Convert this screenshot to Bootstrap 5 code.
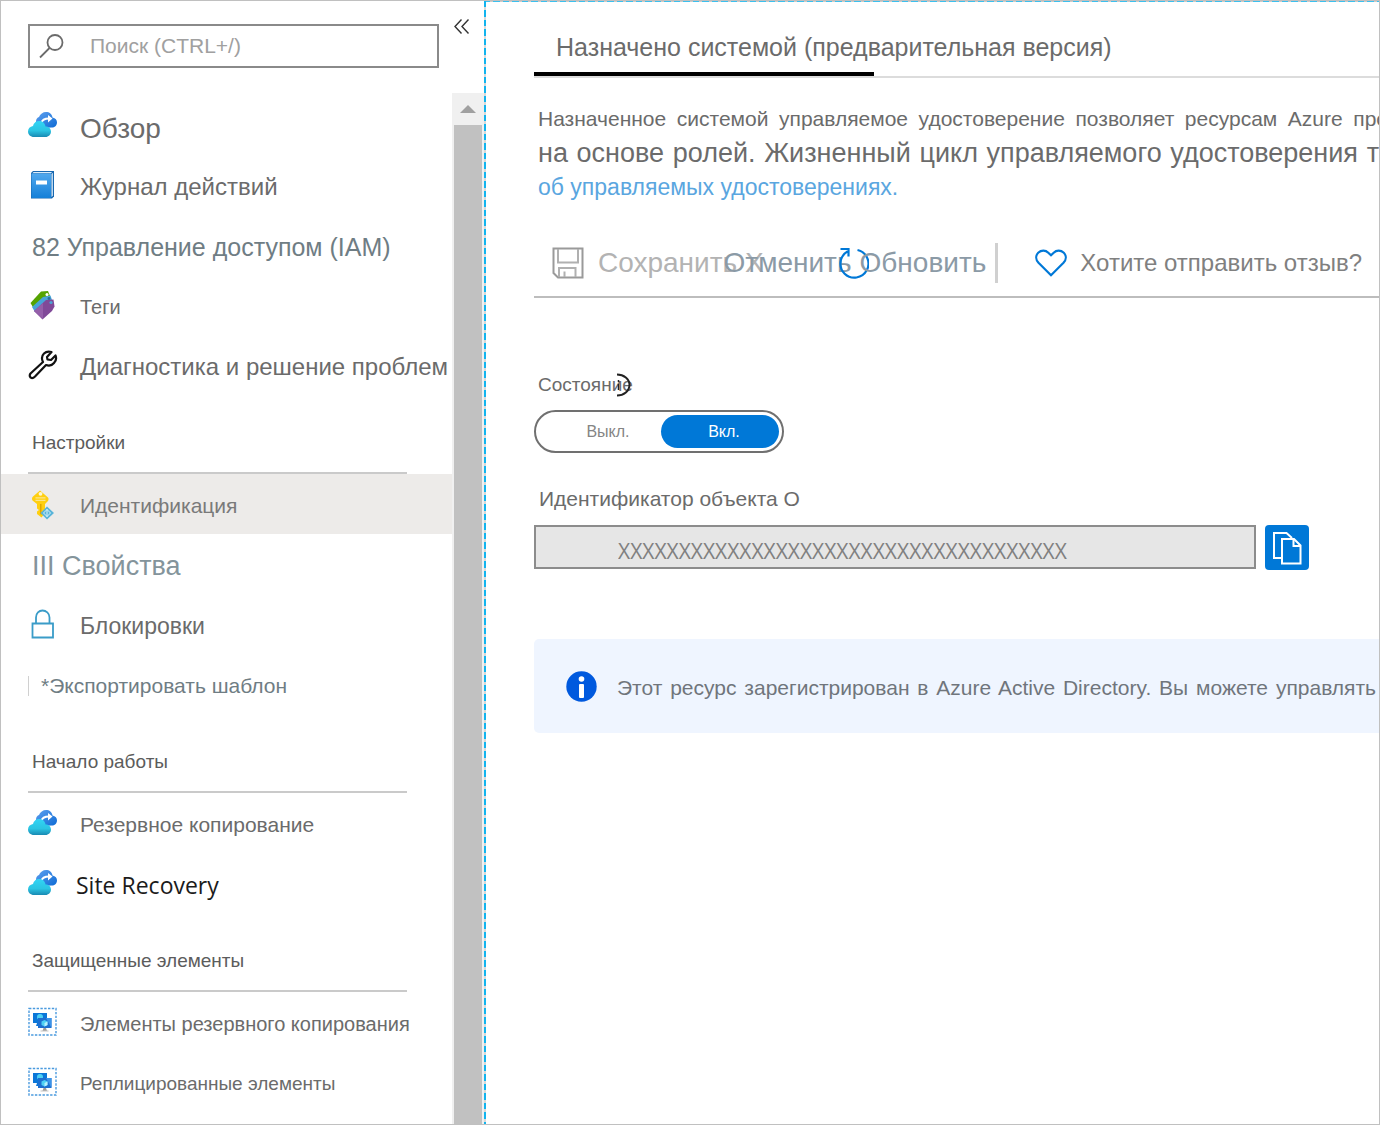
<!DOCTYPE html>
<html lang="ru">
<head>
<meta charset="utf-8">
<meta name="viewport" content="width=device-width, initial-scale=1">
<title>Идентификация</title>
<link href="https://cdn.jsdelivr.net/npm/bootstrap@5.3.0/dist/css/bootstrap.min.css" rel="stylesheet">
<style>
  body { font-family: "Liberation Sans", Arial, sans-serif; color: #6b6b6b; background: #fff; }
  svg { display: block; flex: none; }
  .t16 { font-size: 16px; } .t19 { font-size: 19px; } .t20 { font-size: 20px; } .t21 { font-size: 21px; }
  .t23 { font-size: 23px; } .t24 { font-size: 24px; } .t25 { font-size: 25px; } .t27 { font-size: 27px; } .t28 { font-size: 28px; }
  .plain-btn { border: 0; background: none; padding: 0; color: inherit; }
  .frame { min-height: 100vh; border: 1px solid #c0c0c0; }

  /* side menu */
  .side { width: 483px; flex: none; }
  .side-top { height: 92px; padding: 23px 0 0 27px; }
  .search-box { width: 411px; height: 44px; border: 2px solid #8a8a8a; padding: 0 9px; gap: 26px; }
  .search-box input { border: 0; outline: 0; padding: 0; min-width: 0; color: #6b6b6b; }
  .search-box input::placeholder { color: #a0a0a0; opacity: 1; }
  .fold-btn { margin: -6px 0 0 14px; }
  .side-nav { padding-top: 2px; }
  .menu-row { height: 60px; padding-left: 27px; text-decoration: none; color: #6b6b6b; line-height: 32px; white-space: nowrap; }
  .menu-row svg { margin-right: 22px; }
  .menu-row span { padding-top: 4px; }
  .menu-row .t28 { padding-top: 8px; }
  .menu-row.bare { padding-left: 31px; }
  .menu-row.picked { background: #edebe9; color: #7a7a7a; }
  .menu-row.export span { margin: 4px 0 0 -4px; padding: 0 0 0 12px; border-left: 1px solid #d0d0d0; line-height: 20px; }
  .slate { color: #6f7d84; }
  .slate-light { color: #84949b; }
  .site-rec { font-family: "Open Sans", "Noto Sans", sans-serif; color: #1b1b1b; margin-left: -4px; }
  .menu-head { height: 79px; margin: 0 45px 0 27px; padding: 36px 0 0 4px; border-bottom: 2px solid #cacaca; line-height: 24px; color: #5c5c5c; font-weight: 400; }
  .scroll-col { width: 32px; flex: none; background: #f0f0f0; }
  .scroll-up { height: 32px; }
  .scroll-thumb { background: #c1c1c1; margin: 0 2px; }

  /* main pane */
  .pane { min-width: 0; overflow: hidden; padding-left: 50px;
    background:
      repeating-linear-gradient(180deg, #12b4ee 0 6px, #d8d8d8 6px 9px, #12b4ee 9px 16px, #d8d8d8 16px 19px) 0 0 / 2px 100% no-repeat,
      repeating-linear-gradient(90deg, #3cc0ee 0 6px, #d0c8c4 6px 9px, #3cc0ee 9px 16px, #d0c8c4 16px 19px) 0 0 / 100% 1px no-repeat; }
  .tab-strip { height: 77px; border-bottom: 2px solid #dcdcdc; }
  .tab-strip .nav-link { width: 340px; height: 75px; padding: 20px 0 0 22px; line-height: 52px; border-bottom: 4px solid #000; color: #6b6b6b; white-space: nowrap; }
  .about { margin: 24px 0 25px 4px; line-height: 34px; }
  .about span { text-align-last: justify; }
  .about .wide-line { margin-right: -9px; }
  .about a { color: #5aa6e0; text-decoration: none; }
  .tools { height: 69px; border-bottom: 2px solid #bdbdbd; padding-left: 18px; white-space: nowrap; line-height: 40px; color: #8b9aa6; }
  .tools .save { gap: 14px; color: #b3b3b3; }
  .tools .cancel { margin-left: -40px; }
  .tools .reload { margin-left: -14px; }
  .tools .reload span { margin-left: -9px; }
  .tools .split { width: 3px; height: 40px; margin: 0 37px 0 9px; background: #d0d0d0; }
  .tools .rate { gap: 13px; color: #808080; }
  .state-head { margin: 75px 0 13px 4px; line-height: 24px; }
  .state-head svg { margin-left: -16px; }
  .switch-box { width: 250px; height: 43px; border: 2px solid #707070; border-radius: 22px; padding: 3px; }
  .switch-box label { height: 33px; line-height: 33px; border-radius: 17px; color: #858585; text-align: center; cursor: pointer; }
  .switch-box .off { flex: 1 1 0; padding-left: 16px; }
  .switch-box .on { width: 118px; padding-left: 8px; }
  .switch-box .btn-check:checked + label { background: #0078d7; color: #fff; }
  .id-label { margin: 33px 0 13px 5px; line-height: 26px; }
  .id-row { gap: 9px; padding-right: 70px; margin-bottom: 69px; }
  .id-row input { height: 44px; min-width: 0; border: 2px solid #8c8c8c; background: #e6e6e6; color: #808080; padding: 8px 0 0 82px; font-family: "Open Sans", "Noto Sans", sans-serif; }
  .copy-btn { width: 44px; height: 45px; border: 0; border-radius: 4px; background: #0078d7; padding: 0; }
  .notice { height: 94px; background: #eff5ff; border-radius: 5px 0 0 5px; padding: 0 3px 0 32px; gap: 20px; color: #70757c; }
  .notice p { text-align-last: justify; padding-top: 4px; line-height: 26px; }
</style>
<script src="https://cdn.jsdelivr.net/npm/bootstrap@5.3.0/dist/js/bootstrap.bundle.min.js" defer></script>
</head>
<body>
<svg width="0" height="0" class="position-absolute" aria-hidden="true">
  <defs>
    <linearGradient id="gBack" x1="0" y1="0" x2="1" y2="1"><stop offset="0" stop-color="#5ea0ef"/><stop offset="1" stop-color="#0d6ad4"/></linearGradient>
    <linearGradient id="gFront" x1="0" y1="0" x2="0" y2="1"><stop offset="0" stop-color="#32d4f5"/><stop offset=".6" stop-color="#2bc4e2"/><stop offset="1" stop-color="#198ab3"/></linearGradient>
    <linearGradient id="gBook" x1="0" y1="0" x2="0" y2="1"><stop offset="0" stop-color="#50a8ee"/><stop offset="1" stop-color="#1580d8"/></linearGradient>
    <symbol id="clouds" viewBox="0 0 30 28">
      <path fill="url(#gBack)" d="M12 17C8 16 7 13 8 10.500C8 8 9.500 6.500 11 6C12 3 15 1 18 1C21.500 1 24 3 24.500 6.500C27.500 7 29 9 29 11.500C29 14.500 26.500 16.500 24 16.500Z"/>
      <path fill="none" stroke="#fff" stroke-width="2" d="M13.500 12C14 9 16 7.500 21 7.500"/>
      <path fill="#fff" d="M20 4L24.500 7.500L20 11.500Z"/>
      <path fill="url(#gFront)" d="M6 26C2.500 26 0 23.500 0 20.500C0 17.500 2 15.500 5 15C5.500 12 8 10 11 10C14.500 10 17 12 17.500 15.500C20.500 15.500 23 17.500 23 20.500C23 23.500 20.500 26 17.500 26Z"/>
    </symbol>
    <symbol id="machines" viewBox="0 0 30 30">
      <rect x="1" y="1.500" width="27" height="26.500" fill="none" stroke="#4a9ade" stroke-width="1.400" stroke-dasharray="2.400 1.400"/>
      <rect x="5" y="6" width="14" height="10" fill="#0b76d8"/>
      <path fill="#0b76d8" d="M9 16h3v3H8z"/>
      <circle cx="12" cy="10" r="3" fill="#4fd0f4"/>
      <rect x="10" y="11" width="13.500" height="10" fill="#1e6fd0"/>
      <path fill="#3b94ea" d="M18 11h5.500v10z"/>
      <path fill="#9a9a9a" d="M15.500 21h2.500l1 3h-4.500z"/>
      <path fill="#c4c4c4" d="M12.500 23.500h8v1h-8z"/>
      <path fill="#4fd0f4" d="M16.500 13l3 1.500v3.500l-3 1.500l-3-1.500v-3.500z"/>
      <path fill="#b8f0fb" d="M16.500 16l3-1.500v3.500l-3 1.500z"/>
    </symbol>
  </defs>
</svg>

<div class="frame d-flex">
  <aside class="side d-flex flex-column">
    <div class="side-top d-flex align-items-start">
      <div class="search-box d-flex align-items-center">
        <svg width="25" height="26" viewBox="0 0 25 26" fill="none" stroke="#6b6b6b" stroke-width="1.800"><circle cx="16" cy="9.500" r="7.500"/><path d="M10.500 15L1 24.500"/></svg>
        <input class="t21 flex-fill" type="search" aria-label="Поиск" placeholder="Поиск (CTRL+/)">
      </div>
      <button class="plain-btn fold-btn" type="button" aria-label="Свернуть меню">
        <svg width="17" height="17" viewBox="0 0 17 17" fill="none" stroke="#333" stroke-width="1.400"><path d="M8.500 1.500L2 8.500L8.500 15.500M15.500 1.500L9 8.500L15.500 15.500"/></svg>
      </button>
    </div>
    <div class="d-flex flex-fill">
      <nav class="side-nav flex-fill" aria-label="Меню ресурса">
        <a class="menu-row d-flex align-items-center" href="#"><svg width="30" height="28"><use href="#clouds"/></svg><span class="t28">Обзор</span></a>
        <a class="menu-row d-flex align-items-center" href="#"><svg width="30" height="30" viewBox="0 0 30 30"><path fill="#1767b0" d="M5 1h21v25.500l-2 2H3V3z"/><path fill="#e8f4fd" d="M23.500 4l1.300-1.300v23L23.500 27z"/><path fill="#d8ecfb" d="M5.500 2H24l-1 1.200H4.500z"/><path fill="url(#gBook)" d="M3.500 3.500H23V28H3.500z"/><path fill="#fff" d="M8 10.500h11v4H8z"/></svg><span class="t24">Журнал действий</span></a>
        <a class="menu-row bare d-flex align-items-center slate" href="#"><span class="t25">82 Управление доступом (IAM)</span></a>
        <a class="menu-row d-flex align-items-center" href="#"><svg width="30" height="30" viewBox="0 0 30 30"><path fill="#55a300" d="M2.500 13L13 1.500L20 1L22 6L6 19z"/><path fill="#48a4d8" d="M4 17L15 7L22.500 5.500L24 10L7 22z"/><path fill="#804998" d="M6 21L18 10L25.500 9.500L26.500 16.500L24 21L14.500 29.500z"/><path fill="#945fa9" d="M6 21L15 13V29z"/><circle cx="19" cy="4.500" r="1.500" fill="#fff"/><circle cx="21" cy="8.500" r="1.400" fill="#2c6d9c"/><circle cx="23" cy="12.500" r="1.600" fill="#4ba3d6"/></svg><span class="t20">Теги</span></a>
        <a class="menu-row d-flex align-items-center" href="#"><svg width="30" height="30" viewBox="0 0 30 30" fill="none" stroke="#111" stroke-width="2.200" stroke-linejoin="round" stroke-linecap="round"><path d="M15 12L2.500 23.500C1 25.500 2 27.500 3.500 28C5 28.300 6 27.500 7 26.500L18 15C21 16 24 15.500 26 13C28 11 28.500 8 27.500 5.500L23 10L19.500 9.500L19 7L23.500 2C20 1 17.500 2 16 3.500C14 5.500 13.500 9 15 12Z"/></svg><span class="t24">Диагностика и решение проблем</span></a>

        <h2 class="menu-head t19">Настройки</h2>
        <a class="menu-row picked d-flex align-items-center" href="#" aria-current="page"><svg width="30" height="32" viewBox="0 0 30 32"><path fill="#ffcf10" d="M12 2.500L20 9.500C21 11 20.500 12.500 19.500 13.500L17 16V25L13.500 29.500L9 26V23.500L11 22L9 20.500V16L4.500 12.500C3.500 11 4 9.500 5 8.500Z"/><path stroke="#fbe68c" stroke-width="1.200" d="M7.500 9.800h10M7.500 12.300h10"/><path fill="#e0a800" d="M12 16h1.500v11L12 26z"/><circle cx="12.500" cy="5.800" r="1.900" fill="#fff7d0"/><path fill="#59b4d9" d="M19 18.500L26 25L19 31.500L12.500 25z"/><path fill="none" stroke="#d8f2fa" stroke-width="1" d="M19 21V29M15.500 25L19 21.500L22.500 25L19 28.500z"/></svg><span class="t21">Идентификация</span></a>
        <a class="menu-row bare d-flex align-items-center slate-light" href="#"><span class="t27">III Свойства</span></a>
        <a class="menu-row d-flex align-items-center" href="#"><svg width="30" height="30" viewBox="0 0 30 30" fill="none" stroke="#3a9cc8" stroke-width="1.800"><path d="M4.500 14.500h20.500v14H4.500zM8 14V8.500C8 4 11 1.500 14.500 1.500S21.500 4 21.500 8.500V14"/></svg><span class="t23">Блокировки</span></a>
        <a class="menu-row bare export d-flex align-items-center slate" href="#"><span class="t21">*Экспортировать шаблон</span></a>

        <h2 class="menu-head t19">Начало работы</h2>
        <a class="menu-row d-flex align-items-center" href="#"><svg width="30" height="28"><use href="#clouds"/></svg><span class="t21">Резервное копирование</span></a>
        <a class="menu-row d-flex align-items-center" href="#"><svg width="30" height="28"><use href="#clouds"/></svg><span class="t23 site-rec">Site Recovery</span></a>

        <h2 class="menu-head t19">Защищенные элементы</h2>
        <a class="menu-row d-flex align-items-center" href="#"><svg width="30" height="30"><use href="#machines"/></svg><span class="t20">Элементы резервного копирования</span></a>
        <a class="menu-row d-flex align-items-center" href="#"><svg width="30" height="30"><use href="#machines"/></svg><span class="t19">Реплицированные элементы</span></a>
      </nav>
      <div class="scroll-col d-flex flex-column">
        <button class="plain-btn scroll-up d-flex align-items-center justify-content-center" type="button" aria-label="Прокрутить вверх"><svg width="16" height="8" viewBox="0 0 16 8"><path fill="#a0a0a0" d="M0 8L8 0L16 8z"/></svg></button>
        <div class="scroll-thumb flex-fill"></div>
      </div>
    </div>
  </aside>

  <main class="pane flex-fill">
    <nav class="tab-strip nav" aria-label="Вкладки">
      <a class="nav-link active t25" href="#" aria-current="true">Назначено системой (предварительная версия)</a>
    </nav>

    <div class="about">
      <span class="d-block wide-line t21">Назначенное системой управляемое удостоверение позволяет ресурсам Azure про</span>
      <span class="d-block t27">на основе ролей. Жизненный цикл управляемого удостоверения т</span>
      <a class="d-block t23" href="#">об управляемых удостоверениях.</a>
    </div>

    <div class="tools d-flex align-items-center t28">
      <button class="plain-btn save d-flex align-items-center" type="button">
        <svg width="32" height="32" viewBox="0 0 32 32" fill="none" stroke="#9a9a9a" stroke-width="2"><path d="M1.500 1.500H30.500V30.500H6L1.500 26z"/><path stroke="#b0b0b0" d="M6 2v13.500H26V2M7 30v-9H23.500V30M12.500 24.500V30"/></svg>
        <span>Сохранить X</span>
      </button>
      <button class="plain-btn cancel" type="button">Отменить</button>
      <button class="plain-btn reload d-flex align-items-center" type="button">
        <svg width="31" height="32" viewBox="0 0 31 32" fill="none" stroke="#0078d7" stroke-width="2.200"><path d="M19.500 3A14 14 0 1 1 9.500 4.500M2.500 2H10.500V9.500"/></svg>
        <span>Обновить</span>
      </button>
      <div class="split"></div>
      <button class="plain-btn rate d-flex align-items-center" type="button">
        <svg width="32" height="28" viewBox="0 0 32 28" fill="none" stroke="#0078d7" stroke-width="2.200"><path d="M16 26.200L3.500 13.800C.5 10.500.5 6.500 3.200 3.800C6.200 1 10.500 1 13.300 3.700L16 6.300L18.700 3.700C21.500 1 25.800 1 28.800 3.800C31.500 6.500 31.500 10.500 28.500 13.800Z"/></svg>
        <span class="t24">Хотите отправить отзыв?</span>
      </button>
    </div>

    <div class="state-head d-flex align-items-center t19">
      <span id="stateName">Состояние</span>
      <svg width="14" height="24" viewBox="0 0 14 24" fill="none" stroke="#222" stroke-width="2"><path d="M0 1.500A12.500 10.500 0 0 1 0 22.500"/><path stroke-width="1.500" d="M1.500 7v2M1.500 11v6"/></svg>
    </div>
    <div class="switch-box d-flex align-items-center t16" role="radiogroup" aria-labelledby="stateName">
      <input class="btn-check" type="radio" name="state" id="stateOff"><label class="off" for="stateOff">Выкл.</label>
      <input class="btn-check" type="radio" name="state" id="stateOn" checked><label class="on" for="stateOn">Вкл.</label>
    </div>

    <label class="id-label d-block t21" for="objectId">Идентификатор объекта O</label>
    <div class="id-row d-flex">
      <input class="flex-fill t21" id="objectId" type="text" readonly value="XXXXXXXXXXXXXXXXXXXXXXXXXXXXXXXXXXXXX">
      <button class="copy-btn d-flex align-items-center justify-content-center" type="button" aria-label="Копировать">
        <svg width="30" height="34" viewBox="0 0 30 34" fill="none" stroke="#fff" stroke-width="2"><path d="M10 27H2V2H14.500L20 7"/><path d="M10 8H22L28.500 14.500V32.500H10z"/><path d="M21.500 8V15H28.500"/></svg>
      </button>
    </div>

    <div class="notice d-flex align-items-center" role="status">
      <svg width="31" height="31" viewBox="0 0 31 31"><circle cx="15.500" cy="15.500" r="15.200" fill="#0059de"/><circle cx="15.500" cy="8" r="2.800" fill="#fff"/><rect x="13" y="13" width="5" height="14" rx="1" fill="#fff"/></svg>
      <p class="t21 mb-0 flex-fill">Этот ресурс зарегистрирован в Azure Active Directory. Вы можете управлять</p>
    </div>
  </main>
</div>
</body>
</html>
